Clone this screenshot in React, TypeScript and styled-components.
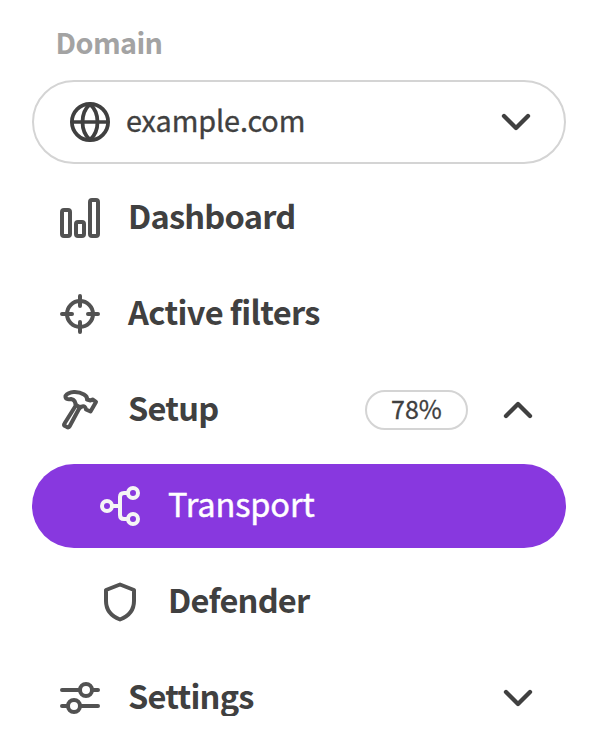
import React from "react";
import styled, { createGlobalStyle } from "styled-components";

const GlobalStyle = createGlobalStyle`
  * { box-sizing: border-box; }
  body { margin: 0; background: #fff; }
`;

const Sidebar = styled.nav`
  width: 598px;
  height: 716px;
  overflow: hidden;
  padding: 22px 32px 0;
  color: #404040;
  font-family: "Noto Sans CJK SC", "Noto Sans", sans-serif;
`;

const Label = styled.div`
  height: 40px;
  margin: 0 0 18px 23.5px;
  font-size: 28.8px;
  font-weight: 700;
  line-height: 40px;
  color: #a3a3a3;
  letter-spacing: -0.6px;
`;

const Select = styled.div`
  display: flex;
  align-items: center;
  height: 84px;
  padding: 0 32px 0 36px;
  border: 2px solid #d4d4d4;
  border-radius: 42px;
`;

const Menu = styled.div`
  display: flex;
  flex-direction: column;
  gap: 12px;
  margin-top: 12px;
`;

const Row = styled.div<{ $nested?: boolean; $active?: boolean }>`
  display: flex;
  flex: none;
  align-items: center;
  height: 84px;
  padding: 0 32px 0 ${(p) => (p.$nested ? 68 : 28)}px;
  border-radius: 42px;
  background: ${(p) => (p.$active ? "#8838df" : "transparent")};
  color: ${(p) => (p.$active ? "#fff" : "inherit")};
`;

const Text = styled.span<{ $spacing?: number }>`
  flex: 1;
  margin: 0 0 7px 28px;
  font-size: 32.6px;
  font-weight: 700;
  line-height: 36px;
  white-space: nowrap;
  letter-spacing: ${(p) => p.$spacing ?? -0.78}px;
`;

const ActiveText = styled(Text)`
  font-weight: 400;
  letter-spacing: -0.15px;
  -webkit-text-stroke: 0.45px currentColor;
`;

const DomainName = styled(Text)`
  margin: 0 0 5px 16px;
  font-size: 28.8px;
  font-weight: 400;
  letter-spacing: -0.1px;
  -webkit-text-stroke: 0.35px currentColor;
`;

const Badge = styled.span`
  width: 103px;
  height: 40px;
  margin-right: 34px;
  border: 2px solid #d4d4d4;
  border-radius: 20px;
  font-size: 25px;
  line-height: 33px;
  text-align: center;
  -webkit-text-stroke: 0.3px currentColor;
`;

const Icon = styled.svg<{ $light?: boolean }>`
  flex: none;
  width: 40px;
  height: 40px;
  overflow: visible;
  fill: none;
  stroke: ${(p) => (p.$light ? "#f5f5f5" : "#525252")};
  stroke-width: 4;
  stroke-linecap: round;
  stroke-linejoin: round;
`;

const Globe = styled(Icon)`
  stroke: #404040;
  stroke-width: 3.8;
`;

const Arrow = styled.svg`
  flex: none;
  width: 32px;
  height: 20px;
  fill: none;
  stroke: #404040;
  stroke-width: 4.3;
  stroke-linecap: round;
  stroke-linejoin: round;
`;

const Chevron = ({ up = false }: { up?: boolean }) => (
  <Arrow viewBox="0 0 32 20">
    <path d={up ? "M4 16 16 4l12 12" : "M4 4l12 12L28 4"} />
  </Arrow>
);

export default function App() {
  return (
    <>
      <GlobalStyle />
      <Sidebar>
        <Label>Domain</Label>
        <Select>
          <Globe viewBox="0 0 40 40">
            <circle cx="20" cy="20" r="18.1" />
            <path d="M20 2C10 11 10 29 20 38C30 29 30 11 20 2Z" />
            <path d="M2 20h36" strokeWidth="3.4" />
          </Globe>
          <DomainName>example.com</DomainName>
          <Chevron />
        </Select>
        <Menu>
          <Row>
            <Icon viewBox="0 0 40 40">
              <rect x="2" y="12" width="8" height="26" rx="2" />
              <rect x="16" y="24" width="8" height="14" rx="2" />
              <rect x="30" y="2" width="8" height="36" rx="2" />
            </Icon>
            <Text>Dashboard</Text>
          </Row>
          <Row>
            <Icon viewBox="0 0 40 40">
              <circle cx="20" cy="20" r="13" />
              <path d="M2 20h10M28 20h10M20 2v10M20 28v10" />
            </Icon>
            <Text $spacing={-0.62}>Active filters</Text>
          </Row>
          <Row>
            <Icon viewBox="0 0 40 40">
              <path d="M5.5 6C9 1 18 1 24 4.5Q27.5 6.5 27 9.5L30.5 10.5L32.5 9.5L36 12L30.5 21.5L26 19.5Q25.5 15.5 22 16.5L20 17L9.5 36.5Q8.5 38 7 37L5 36Q3.5 35 4.5 33.5L15.5 16Q16 10 11 9Q5 10 5.5 6Z" />
              <path d="M16 15L20.5 17.5" />
            </Icon>
            <Text>Setup</Text>
            <Badge>78%</Badge>
            <Chevron up />
          </Row>
          <Row $nested $active>
            <Icon $light viewBox="0 0 40 40">
              <circle cx="7" cy="20" r="5" />
              <circle cx="33" cy="7" r="5" />
              <circle cx="33" cy="33" r="5" />
              <path d="M12 20h8M28 7h-4q-4 0-4 4v18q0 4 4 4h4" />
            </Icon>
            <ActiveText>Transport</ActiveText>
          </Row>
          <Row $nested>
            <Icon viewBox="0 0 40 40">
              <path d="M20 2.5L34 8V19C34 28 29 34 20 37.5C11 34 6 28 6 19V8Z" />
            </Icon>
            <Text>Defender</Text>
          </Row>
          <Row>
            <Icon viewBox="0 0 40 40">
              <circle cx="26" cy="12" r="6" />
              <circle cx="14" cy="28" r="6" />
              <path d="M2 12h18M32 12h6M2 28h6M20 28h18" />
            </Icon>
            <Text>Settings</Text>
            <Chevron />
          </Row>
        </Menu>
      </Sidebar>
    </>
  );
}
